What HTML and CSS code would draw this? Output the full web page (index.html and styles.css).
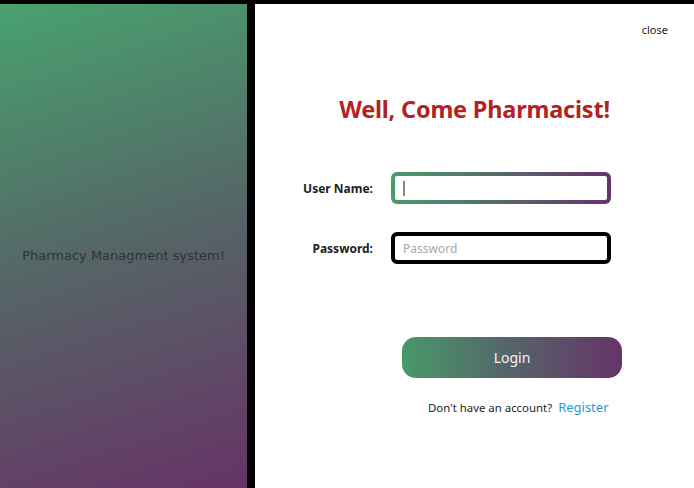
FILE: index.html
```html
<!DOCTYPE html>
<html>
<head>
<meta charset="utf-8">
<link rel="stylesheet" href="styles.css">
</head>
<body>
<div class="app">
  <aside class="side">
    <p class="side-text">Pharmacy Managment system!</p>
  </aside>
  <main class="panel">
    <div class="topbar"><span class="close">close</span></div>
    <h1 class="title">Well, Come Pharmacist!</h1>
    <div class="form">
      <div class="row">
        <label class="label">User Name:</label>
        <div class="field field-grad"><span class="caret"></span></div>
      </div>
      <div class="row row-pass">
        <label class="label">Password:</label>
        <div class="field field-black"><span class="ph">Password</span></div>
      </div>
    </div>
    <div class="actions">
      <button class="login">Login</button>
      <div class="signup"><span class="ask">Don't have an account?</span><span class="reg">Register</span></div>
    </div>
  </main>
</div>
</body>
</html>
```
FILE: styles.css
```css
html, body {
  margin: 0;
  padding: 0;
  background: #000;
  height: 100%;
}
.app {
  display: flex;
  gap: 8px;
  padding-top: 4px;
  height: 484px;
  font-family: "Noto Sans", sans-serif;
}
.side {
  width: 247px;
  flex: none;
  background: linear-gradient(162deg, #48a26f 0%, #556566 50%, #673366 100%);
  display: flex;
  align-items: center;
  justify-content: center;
}
.side-text {
  margin: 0;
  margin-top: 19px;
  font-family: "DejaVu Sans", sans-serif;
  font-size: 13px;
  color: #333;
}
.panel {
  flex: 1;
  background: #fff;
  display: flex;
  flex-direction: column;
}
.topbar {
  display: flex;
  justify-content: flex-end;
  padding: 18px 26px 0 0;
  height: 20px;
}
.close {
  font-size: 11px;
  color: #222;
}
.title {
  margin: 52px 0 0 0;
  text-align: center;
  font-size: 23.5px;
  font-weight: 700;
  color: #b22222;
  line-height: 30px;
  letter-spacing: -0.2px;
}
.form {
  margin-top: 48px;
  display: flex;
  flex-direction: column;
  gap: 28px;
}
.row {
  display: flex;
  align-items: center;
}
.label {
  width: 118px;
  text-align: right;
  font-size: 12px;
  font-weight: 700;
  color: #222;
}
.field {
  margin-left: 18px;
  width: 212px;
  height: 24px;
  border-radius: 6px;
  display: flex;
  align-items: center;
  box-sizing: content-box;
}
.field-black {
  border: 4px solid #000;
}
.field-grad {
  border: 4px solid transparent;
  background: linear-gradient(#fff, #fff) padding-box, linear-gradient(90deg, #479d6c, #66336a) border-box;
}
.caret {
  margin-left: 8px;
  width: 2px;
  height: 15px;
  background: #888;
}
.ph {
  margin-left: 8px;
  font-size: 12px;
  color: #a8a8a8;
}
.actions {
  margin-top: 73px;
  display: flex;
  flex-direction: column;
  align-items: flex-start;
  padding-left: 147px;
}
.login {
  width: 220px;
  height: 41px;
  border: none;
  border-radius: 14px;
  background: linear-gradient(90deg, #48996a, #56636a 50%, #653468);
  color: #f4f4f4;
  font-family: "Noto Sans", sans-serif;
  font-size: 14px;
}
.signup {
  margin-top: 20px;
  margin-left: 26px;
  display: flex;
  align-items: baseline;
  gap: 6px;
}
.ask {
  font-size: 11.4px;
  color: #222;
}
.reg {
  font-size: 13px;
  color: #1a9ed6;
}
```
